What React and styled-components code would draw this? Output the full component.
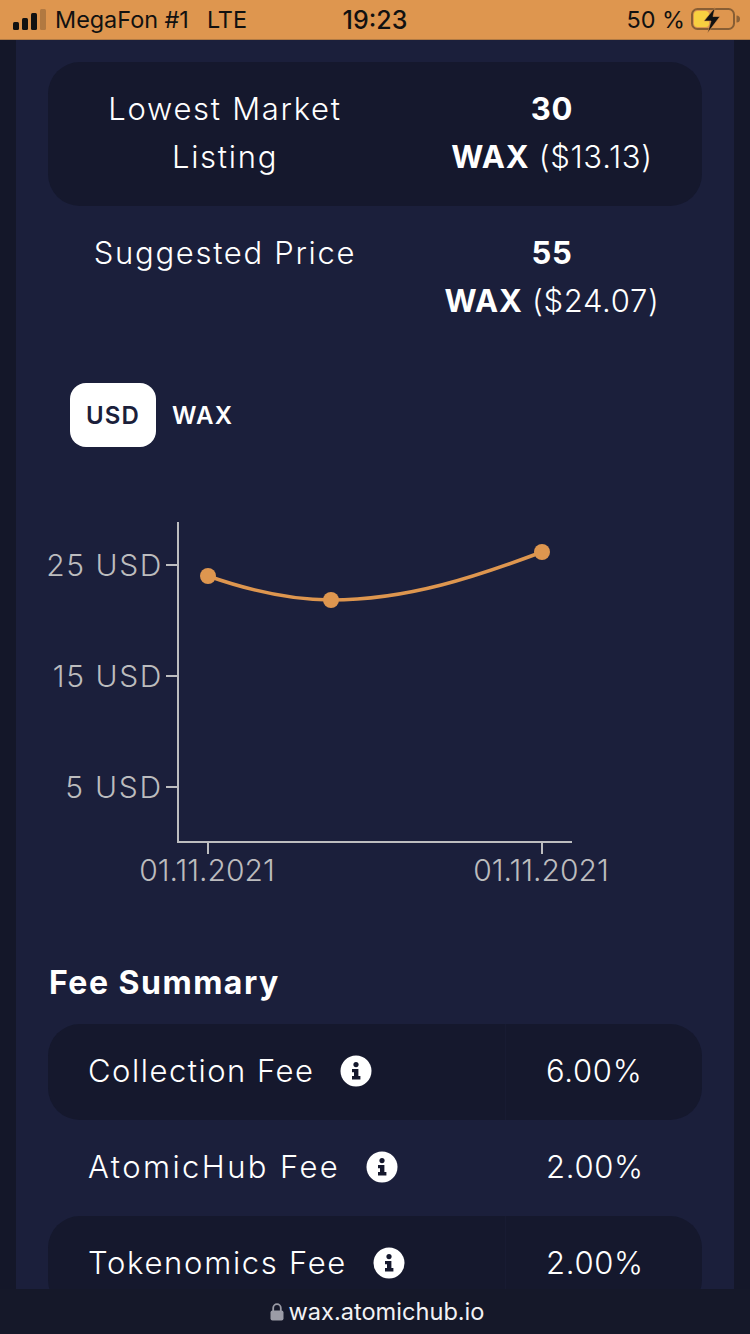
import React from "react";
import styled, { createGlobalStyle } from "styled-components";

const Global = createGlobalStyle`
  html, body { margin: 0; padding: 0; background: #141729; }
  * { box-sizing: border-box; }
`;

const Screen = styled.div`
  position: relative;
  width: 750px;
  height: 1334px;
  overflow: hidden;
  display: flex;
  flex-direction: column;
  background: #141729;
  font-family: "Inter", "Open Sans", sans-serif;
  color: #fff;
`;

const StatusBar = styled.header`
  flex: none;
  height: 40px;
  background: #de964f;
  border-bottom: 1px solid #b07a44;
  display: grid;
  grid-template-columns: 1fr auto 1fr;
  align-items: center;
  padding: 0 9px 0 13px;
  color: #111;
  font-family: "Inter", sans-serif;
  font-size: 23.4px;
`;

const StatusLeft = styled.div`
  display: flex;
  align-items: center;
  gap: 6px;
`;

const StatusRight = styled.div`
  display: flex;
  align-items: center;
  justify-content: flex-end;
  gap: 6px;
`;

const Lte = styled.span`
  margin-left: 12px;
`;

const Clock = styled.span`
  font-weight: 500;
  font-size: 25px;
  margin-right: 4px;
`;

const Page = styled.main`
  flex: 1;
  margin: 0 16px;
  background: #1b1f3b;
  padding: 22px 32px 0;
  min-height: 0;
`;

const PriceTable = styled.section`
  display: flex;
  flex-direction: column;
`;

const PriceRow = styled.div`
  display: grid;
  grid-template-columns: 354px 300px;
  height: 144px;
  padding: 23px 0 21px;
  border-radius: 32px;
  background: ${(p) => (p.$shaded ? "#15182d" : "transparent")};
  font-size: 31px;
  line-height: 48px;
  font-weight: 300;
  text-align: center;
`;

const PriceLabel = styled.div`
  padding: 0 38px;
  letter-spacing: 1.7px;
`;

const PriceValue = styled.div`
  letter-spacing: 0.7px;
`;

const Strong = styled.strong`
  font-weight: 700;
`;

const Toggle = styled.div`
  display: flex;
  align-items: center;
  gap: 16px;
  margin: 33px 0 0 22px;
`;

const ToggleOption = styled.button`
  border: 0;
  width: ${(p) => (p.$active ? "86px" : "auto")};
  height: 64px;
  padding: 0;
  border-radius: 16px;
  background: ${(p) => (p.$active ? "#fff" : "transparent")};
  color: ${(p) => (p.$active ? "#1b1f3b" : "#fff")};
  font-family: inherit;
  font-size: 24px;
  font-weight: 600;
  letter-spacing: 1.2px;
`;

const ChartBox = styled.div`
  margin-top: 75px;
  height: 368px;
`;

const ChartSvg = styled.svg`
  display: block;
  overflow: visible;
`;

const AxisLabel = styled.text`
  fill: #bcbcbe;
  font-family: "Inter", sans-serif;
  font-size: 30px;
  font-weight: 300;
  letter-spacing: ${(p) => p.$spacing || 0}px;
`;

const SectionTitle = styled.h2`
  margin: 75px 0 0 1px;
  font-size: 32px;
  line-height: 36px;
  font-weight: 700;
  letter-spacing: 1.5px;
`;

const FeeTable = styled.section`
  margin-top: 23px;
  display: flex;
  flex-direction: column;
`;

const FeeRow = styled.div`
  flex: none;
  display: grid;
  grid-template-columns: 458px 196px;
  height: 96px;
  border-radius: 32px;
  background: ${(p) => (p.$shaded ? "#15182d" : "transparent")};
  font-size: 31px;
  font-weight: 300;
  align-items: center;
`;

const FeeName = styled.div`
  display: flex;
  align-items: center;
  gap: 26px;
  padding: 0 0 3px 40px;
  height: 100%;
  letter-spacing: ${(p) => p.$spacing}px;
  border-right: 1px solid ${(p) => (p.$shaded ? "#181b32" : "transparent")};
`;

const FeeValue = styled.div`
  padding: 0 0 3px 40px;
  letter-spacing: 0.7px;
`;

const BottomBar = styled.footer`
  position: absolute;
  left: 0;
  right: 0;
  bottom: 0;
  height: 45px;
  background: #151829;
  display: flex;
  align-items: center;
  justify-content: center;
  gap: 5px;
  padding-left: 4px;
  font-size: 23.6px;
  font-weight: 400;
  color: #f2f2f4;
`;

const Signal = () => (
  <svg width="36" height="24" viewBox="0 0 36 24">
    <rect x="0" y="14" width="6" height="8" rx="1.5" fill="#111" />
    <rect x="9" y="10" width="6" height="12" rx="1.5" fill="#111" />
    <rect x="18" y="5" width="6" height="17" rx="1.5" fill="#111" />
    <rect x="27" y="1" width="6" height="21" rx="1.5" fill="#111" opacity="0.22" />
  </svg>
);

const Battery = () => (
  <svg width="50" height="28" viewBox="0 0 50 28">
    <rect x="1" y="3" width="42" height="20" rx="5.5" fill="none" stroke="#111" strokeOpacity="0.42" strokeWidth="2" />
    <rect x="3" y="5" width="15" height="16" rx="3.5" fill="#f8d040" />
    <path d="M45.5 9.5 a3.5 3.5 0 0 1 0 7z" fill="#111" fillOpacity="0.4" />
    <path d="M24 1.5 L13 15 L20 15 L16.5 27 L29 10.5 L22 10.5 Z" fill="#111" stroke="#de964f" strokeWidth="0.6" />
  </svg>
);

const InfoIcon = () => (
  <svg width="32" height="32" viewBox="0 0 32 32">
    <circle cx="16" cy="16" r="15.5" fill="#fff" />
    <circle cx="16" cy="9.6" r="2.6" fill="#15182d" />
    <path d="M12 14 H18.4 V21 H20.4 V24.4 H12 V21 H14 V17.2 H12 Z" fill="#15182d" />
  </svg>
);

const Lock = () => (
  <svg width="14" height="18" viewBox="0 0 14 18">
    <path d="M3.2 8 V5 a3.8 3.8 0 0 1 7.6 0 V8" fill="none" stroke="#9b9ca6" strokeWidth="1.8" />
    <rect x="0.5" y="7.5" width="13" height="10" rx="2" fill="#9b9ca6" />
  </svg>
);

const Chart = () => (
  <ChartSvg width="620" height="368" viewBox="0 0 620 368">
    <g stroke="#bdbdbf" strokeWidth="2" fill="none">
      <path d="M130 0 V320 H524" />
      <path d="M118 43 H130 M118 154 H130 M118 265 H130" />
      <path d="M160 320 V332 M494 320 V332" />
    </g>
    <AxisLabel x="115" y="54" textAnchor="end" $spacing={1.6}>25 USD</AxisLabel>
    <AxisLabel x="115" y="165" textAnchor="end" $spacing={1.6}>15 USD</AxisLabel>
    <AxisLabel x="115" y="276" textAnchor="end" $spacing={1.8}>5 USD</AxisLabel>
    <AxisLabel x="159" y="359" textAnchor="middle">01.11.2021</AxisLabel>
    <AxisLabel x="493" y="359" textAnchor="middle">01.11.2021</AxisLabel>
    <path d="M160 54 C200 68 240 78 283 78 C360 78 430 54 494 30" fill="none" stroke="#de964f" strokeWidth="3.5" />
    <circle cx="160" cy="54" r="8" fill="#de964f" />
    <circle cx="283" cy="78" r="8" fill="#de964f" />
    <circle cx="494" cy="30" r="8" fill="#de964f" />
  </ChartSvg>
);

const fees = [
  { name: "Collection Fee", value: "6.00%", shaded: true, spacing: 1.5 },
  { name: "AtomicHub Fee", value: "2.00%", shaded: false, spacing: 2.4 },
  { name: "Tokenomics Fee", value: "2.00%", shaded: true, spacing: 1.7 },
];

export default function App() {
  return (
    <Screen>
      <Global />
      <StatusBar>
        <StatusLeft>
          <Signal />
          <span>MegaFon #1</span>
          <Lte>LTE</Lte>
        </StatusLeft>
        <Clock>19:23</Clock>
        <StatusRight>
          <span>50 %</span>
          <Battery />
        </StatusRight>
      </StatusBar>
      <Page>
        <PriceTable>
          <PriceRow $shaded>
            <PriceLabel>Lowest Market Listing</PriceLabel>
            <PriceValue>
              <Strong>30</Strong>
              <br />
              <Strong>WAX</Strong> ($13.13)
            </PriceValue>
          </PriceRow>
          <PriceRow>
            <PriceLabel>Suggested Price</PriceLabel>
            <PriceValue>
              <Strong>55</Strong>
              <br />
              <Strong>WAX</Strong> ($24.07)
            </PriceValue>
          </PriceRow>
        </PriceTable>
        <Toggle>
          <ToggleOption $active>USD</ToggleOption>
          <ToggleOption>WAX</ToggleOption>
        </Toggle>
        <ChartBox>
          <Chart />
        </ChartBox>
        <SectionTitle>Fee Summary</SectionTitle>
        <FeeTable>
          {fees.map((f) => (
            <FeeRow key={f.name} $shaded={f.shaded}>
              <FeeName $shaded={f.shaded} $spacing={f.spacing}>
                <span>{f.name}</span>
                <InfoIcon />
              </FeeName>
              <FeeValue>{f.value}</FeeValue>
            </FeeRow>
          ))}
        </FeeTable>
      </Page>
      <BottomBar>
        <Lock />
        <span>wax.atomichub.io</span>
      </BottomBar>
    </Screen>
  );
}
